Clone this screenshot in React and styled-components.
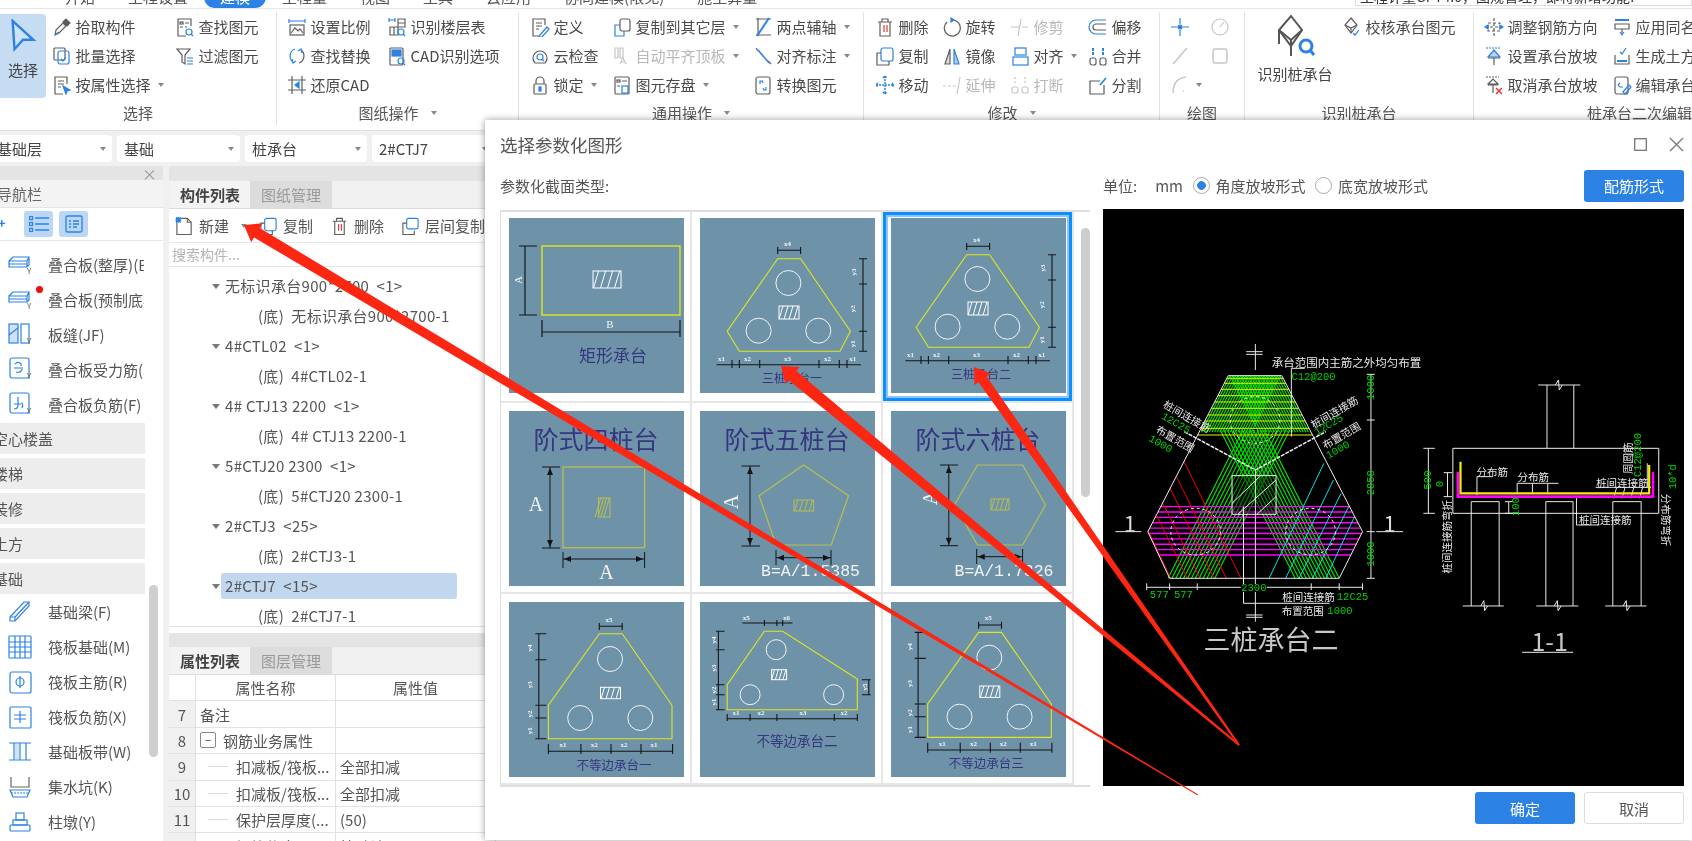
import React from 'react';
import styled, { createGlobalStyle } from 'styled-components';

const BLUE = '#2b82e4';
const GREY = '#5e5e5e';
const OFF = '#c6c6c6';
const FONT = '"Noto Sans CJK SC", "Noto Sans", sans-serif';

const GlobalStyle = createGlobalStyle`
  html, body { margin: 0; padding: 0; background: #fff; }
  body { font-family: ${FONT}; color: #444; overflow: hidden; }
`;

const Page = styled.div`
  position: relative;
  width: 1692px;
  height: 841px;
  overflow: hidden;
  display: flex;
  flex-direction: column;
  background: #f0f0f0;
  filter: blur(0.45px);
`;

/* ---------- menu bar, almost entirely cut off by the top of the shot ---------- */
const MenuBar = styled.div`
  height: 9px;
  flex: none;
  overflow: hidden;
  background: #fff;
  border-bottom: 1px solid #e6e6e6;
  display: flex;
  box-sizing: border-box;
`;
const MenuTabs = styled.div`
  margin-top: -14px;
  height: 22px;
  padding-left: 65px;
  display: flex;
  gap: 33px;
`;
const MenuTab = styled.div`
  font-size: 15px;
  line-height: 22px;
  white-space: nowrap;
  color: ${(p) => (p.$active ? '#fff' : '#555')};
  background: ${(p) => (p.$active ? BLUE : 'transparent')};
  border-radius: ${(p) => (p.$active ? '12px' : '0')};
  padding: ${(p) => (p.$active ? '0 16px' : '0')};
  margin: ${(p) => (p.$active ? '0 -17px 0 -17px' : '0')};
`;
const TopSearch = styled.div`
  margin-left: auto;
  width: 337px;
  height: 20px;
  margin-top: -14px;
  box-sizing: border-box;
  border: 1px solid #ddd;
  background: #fff;
  font-size: 14px;
  line-height: 18px;
  padding-left: 4px;
  color: #333;
  white-space: nowrap;
  overflow: hidden;
`;

/* ---------- ribbon ---------- */
const Ribbon = styled.div`
  height: 122px;
  flex: none;
  display: flex;
  background: #fff;
  border-bottom: 1px solid #e2e2e2;
  box-sizing: border-box;
  padding-top: 3px;
`;
const Group = styled.div`
  flex: none;
  width: ${(p) => p.$w}px;
  height: 113px;
  box-sizing: border-box;
  border-right: 1px solid #e2e2e2;
  display: flex;
  flex-direction: column;
`;
const GroupBody = styled.div`
  flex: 1;
  display: flex;
  padding-left: ${(p) => p.$pl}px;
`;
const GroupLabel = styled.div`
  height: 24px;
  font-size: 15px;
  line-height: 20px;
  color: #555;
  display: flex;
  align-items: center;
  justify-content: center;
  gap: 6px;
`;
const Col = styled.div`
  flex: none;
  width: ${(p) => p.$w}px;
  display: flex;
  flex-direction: column;
`;
const Tool = styled.div`
  height: 29px;
  display: flex;
  align-items: center;
  font-size: 15px;
  white-space: nowrap;
  color: ${(p) => (p.$off ? '#b8b8b8' : '#4a4a4a')};
`;
const ToolIcon = styled.svg`
  flex: none;
  width: 20px;
  height: 20px;
  margin-right: 3.5px;
  fill: none;
  stroke: ${GREY};
  stroke-width: 1.2;
`;
const Caret = styled.span`
  display: inline-block;
  margin-left: ${(p) => p.$ml ?? 6}px;
  border-left: 3.5px solid transparent;
  border-right: 3.5px solid transparent;
  border-top: 4px solid #888;
`;
const BigSelect = styled.div`
  flex: none;
  width: 46px;
  height: 84px;
  margin: 2px 6px 0 0;
  border-radius: 0 4px 4px 0;
  background: #c6dcf2;
  display: flex;
  flex-direction: column;
  align-items: center;
  font-size: 15px;
  line-height: 22px;
  color: #444;
  svg { margin: 5px 0 6px; }
`;
const BigPile = styled.div`
  flex: none;
  width: 76px;
  margin-right: 9px;
  display: flex;
  flex-direction: column;
  align-items: center;
  font-size: 15px;
  white-space: nowrap;
  color: #444;
  svg { margin: 2px 0 5px; }
`;

/* ---------- selector row ---------- */
const SelectorRow = styled.div`
  height: 35px;
  flex: none;
  display: flex;
  align-items: center;
  gap: 5px;
  margin-left: -10px;
`;
const Selector = styled.div`
  width: ${(p) => p.$w}px;
  height: 27px;
  flex: none;
  box-sizing: border-box;
  background: #fff;
  border-radius: 4px;
  padding: 0 6px 0 7px;
  display: flex;
  align-items: center;
  justify-content: space-between;
  font-size: 15px;
  color: #444;
`;

/* ---------- workspace ---------- */
const Workspace = styled.div`
  flex: 1;
  min-height: 0;
  display: flex;
  gap: 6px;
`;
const NavPanel = styled.div`
  position: relative;
  width: 163px;
  flex: none;
  background: #fff;
  display: flex;
  flex-direction: column;
  overflow: hidden;
`;
const PanelStrip = styled.div`
  height: ${(p) => p.$h}px;
  flex: none;
  background: #e4e4e4;
  display: flex;
  justify-content: flex-end;
  align-items: center;
  padding-right: 6px;
  color: #999;
  font-size: 15px;
  line-height: 1;
`;
const NavTitle = styled.div`
  height: 28px;
  flex: none;
  background: #f3f3f3;
  border-bottom: 1px solid #e4e4e4;
  box-sizing: border-box;
  font-size: 15px;
  line-height: 27px;
  color: #666;
  text-indent: -3px;
  white-space: nowrap;
`;
const NavTools = styled.div`
  height: 33px;
  flex: none;
  box-sizing: border-box;
  border-bottom: 1px solid #e6e6e6;
  display: flex;
  align-items: center;
  gap: 6px;
  padding-left: 24px;
  position: relative;
`;
const NavToolBtn = styled.div`
  width: 29px;
  height: 26px;
  border-radius: 3px;
  background: #bcd7f5;
  display: flex;
  align-items: center;
  justify-content: center;
`;
const Sparkle = styled.span`
  position: absolute;
  left: -2px;
  top: 5px;
  color: ${BLUE};
  font-size: 13px;
  font-weight: 700;
`;
const NavList = styled.div`
  width: 145px;
  padding-top: 5.5px;
  overflow: hidden;
`;
const NavItem = styled.div`
  position: relative;
  width: 144px;
  height: 35px;
  box-sizing: border-box;
  display: flex;
  align-items: center;
  font-size: 15px;
  color: #555;
  white-space: nowrap;
  overflow: hidden;
  padding-left: 7px;
  svg { flex: none; width: 26px; height: 26px; margin-right: 15px; fill: none; stroke: ${BLUE}; stroke-width: 1.2; }
`;
const RedDot = styled.span`
  position: absolute;
  left: 36px;
  top: 4px;
  width: 7px;
  height: 7px;
  border-radius: 50%;
  background: #f00d0d;
`;
const NavGroup = styled.div`
  height: 31px;
  margin: ${(p) => (p.$first ? '1.5px' : '4px')} 0 0;
  background: #ededed;
  font-size: 15px;
  line-height: 31px;
  color: #555;
  text-indent: -7px;
  white-space: nowrap;
  overflow: hidden;
  &:last-of-type { margin-bottom: 2.5px; }
`;
const NavScroll = styled.div`
  position: absolute;
  left: 149px;
  top: 419px;
  width: 9px;
  height: 172px;
  border-radius: 5px;
  background: #cfcfcf;
`;
const ListPanel = styled.div`
  flex: 1;
  min-width: 0;
  background: #fff;
  display: flex;
  flex-direction: column;
`;
const TabStrip = styled.div`
  height: 28px;
  flex: none;
  box-sizing: border-box;
  background: #f0f0f0;
  border-bottom: 1px solid #ddd;
  display: flex;
  padding-left: 1px;
`;
const PanelTab = styled.div`
  width: 80px;
  text-align: center;
  font-size: 15px;
  line-height: 27px;
  font-weight: ${(p) => (p.$active ? 600 : 400)};
  color: ${(p) => (p.$active ? '#444' : '#999')};
  background: ${(p) => (p.$active ? '#f3f3f3' : '#dcdcdc')};
  border-right: 1px solid #ddd;
`;
const ListTools = styled.div`
  height: 34px;
  flex: none;
  box-sizing: border-box;
  border-bottom: 1px solid #e8e8e8;
  display: flex;
  align-items: center;
  padding-left: 6px;
  font-size: 15px;
  color: #555;
  white-space: nowrap;
`;
const ListTool = styled.div`
  display: flex;
  align-items: center;
  margin: 0 ${(p) => p.$mr}px 0 ${(p) => p.$ml ?? 0}px;
  svg { width: 19px; height: 20px; margin-right: 5px; fill: none; stroke: ${GREY}; stroke-width: 1.2; }
`;
const SearchBar = styled.div`
  height: 24px;
  flex: none;
  box-sizing: border-box;
  border-bottom: 1px solid #e4e4e4;
  font-size: 14px;
  line-height: 22px;
  padding-left: 3px;
  color: #b5b5b5;
`;
const Tree = styled.div`
  height: 360px;
  flex: none;
  box-sizing: border-box;
  border-bottom: 1px solid #e2e2e2;
  padding: 4px 0 0 43px;
  overflow: hidden;
`;
const TreeRow = styled.div`
  height: 30px;
  display: flex;
  align-items: center;
  font-size: 15px;
  letter-spacing: 0.3px;
  white-space: pre;
  color: #555;
`;
const TreeArrow = styled.span`
  flex: none;
  width: 0;
  margin-right: 1px;
  border-left: 4px solid transparent;
  border-right: 4px solid transparent;
  border-top: 5px solid #777;
`;
const TreeSpacer = styled.span`
  flex: none;
  width: 9px;
`;
const TreeLabel = styled.span`
  width: 236px;
  height: 26px;
  line-height: 26px;
  box-sizing: border-box;
  padding-left: ${(p) => (p.$child ? 37 : 4)}px;
  border-radius: 3px;
  background: ${(p) => (p.$sel ? '#c1d7ee' : 'transparent')};
`;
const Gutter = styled.div`
  height: 6px;
  flex: none;
  background: #fff;
`;
const PropTable = styled.div`
  display: grid;
  grid-template-columns: 27px 140px 160px;
  grid-auto-rows: 26.4px;
  font-size: 15px;
  color: #555;
`;
const PropCell = styled.div`
  border-bottom: 1px solid #e2e2e2;
  border-right: 1px solid #e2e2e2;
  background: ${(p) => (p.$idx ? '#f0f0f0' : '#fff')};
  display: flex;
  align-items: center;
  justify-content: ${(p) => (p.$center ? 'center' : 'flex-start')};
  padding-left: ${(p) => (p.$center ? 0 : 4)}px;
  white-space: nowrap;
  overflow: hidden;
`;
const Collapse = styled.span`
  width: 14px;
  height: 14px;
  border: 1px solid #888;
  border-radius: 2px;
  margin-right: 7px;
  display: flex;
  align-items: center;
  justify-content: center;
  line-height: 1;
  font-size: 12px;
`;
const Branch = styled.span`
  flex: none;
  width: 20px;
  height: 1px;
  margin: 0 8px 0 8px;
  background: #ddd;
`;

/* ---------- modal ---------- */
const Modal = styled.div`
  position: absolute;
  left: 485px;
  top: 120px;
  width: 1207px;
  height: 720px;
  background: #fff;
  box-shadow: 0 0 7px rgba(0, 0, 0, 0.4);
  display: flex;
  flex-direction: column;
  box-sizing: border-box;
  padding: 0 8px 0 15px;
`;
const ModalHead = styled.div`
  height: 48px;
  flex: none;
  display: flex;
  align-items: center;
  justify-content: space-between;
  font-size: 17.5px;
  color: #555;
`;
const HeadControls = styled.div`
  display: flex;
  gap: 22px;
  align-items: center;
  svg { fill: none; stroke: #777; stroke-width: 1.3; display: block; }
`;
const ModalBody = styled.div`
  flex: 1;
  min-height: 0;
  display: flex;
  gap: 13px;
`;
const LeftPane = styled.div`
  width: 590px;
  flex: none;
`;
const PaneLabel = styled.div`
  height: 36px;
  margin-bottom: 6px;
  font-size: 15px;
  line-height: 36px;
  color: #555;
`;
const Gallery = styled.div`
  position: relative;
  height: 577px;
  box-sizing: border-box;
  border: solid #dedede;
  border-width: 2px 0 2px 1px;
  overflow: hidden;
  display: grid;
  grid-template-columns: repeat(3, 191px);
  grid-auto-rows: 191px;
  align-content: start;
`;
const GalleryCell = styled.div`
  border-right: 2px solid #e6e6e6;
  border-bottom: 2px solid #e6e6e6;
  box-sizing: border-box;
  padding: ${(p) => (p.$top ? 6 : 8)}px 0 0 8px;
  box-shadow: ${(p) => (p.$sel ? 'inset 0 0 0 3px #0a8fff, inset 0 0 0 5px #8dc4ff' : 'none')};
`;
const Figure = styled.svg`
  display: block;
  width: 175px;
  height: 175px;
  background: #6e93a9;
  fill: none;
`;
const GalleryScroll = styled.div`
  position: absolute;
  left: 580px;
  top: 16px;
  width: 9px;
  height: 269px;
  border-radius: 5px;
  background: #cdcdcd;
`;
const RightPane = styled.div`
  flex: 1;
  min-width: 0;
`;
const UnitRow = styled.div`
  height: 33px;
  margin: 1px 0 7px;
  display: flex;
  align-items: center;
  font-size: 15px;
  color: #555;
  white-space: nowrap;
`;
const UnitValue = styled.span`
  margin-left: 18px;
`;
const Radio = styled.span`
  width: 17px;
  height: 17px;
  flex: none;
  box-sizing: border-box;
  border-radius: 50%;
  border: 1px solid #aaa;
  margin: 0 5.5px 0 10px;
  background: ${(p) => (p.$on ? `radial-gradient(circle, ${BLUE} 0 4px, #fff 4.6px)` : '#fff')};
`;
const PrimaryBtn = styled.button`
  width: ${(p) => p.$w}px;
  height: 32px;
  border: 0;
  border-radius: 3px;
  margin-left: ${(p) => (p.$auto ? 'auto' : '0')};
  background: ${BLUE};
  color: #fff;
  font: 15px ${FONT};
`;
const GhostBtn = styled.button`
  width: 100px;
  height: 32px;
  border: 1px solid #ddd;
  border-radius: 3px;
  background: #fff;
  color: #555;
  font: 15px ${FONT};
`;
const Cad = styled.svg`
  display: block;
  width: 581px;
  height: 577px;
  background: #000;
  fill: none;
  line, polyline, polygon, ellipse, rect, path { vector-effect: non-scaling-stroke; }
`;
const ModalFoot = styled.div`
  height: 55px;
  flex: none;
  box-sizing: border-box;
  padding-top: 7px;
  display: flex;
  justify-content: flex-end;
  gap: 9px;
`;
const ArrowLayer = styled.svg`
  position: absolute;
  left: 0;
  top: 0;
  width: 1692px;
  height: 841px;
  pointer-events: none;
`;

/* ---------- ribbon icons, 20x20 ---------- */
const b = { stroke: BLUE };
const icons = {
  pick: <><path d="M3 18l1-5 7-7 3 3-7 7z" /><path d="M11 5l3-3 4 4-3 3z" fill={GREY} /><path d="M4 17l3-2" {...b} /></>,
  batch: <><rect x="2" y="2" width="11" height="12" rx="1" /><rect x="6" y="5" width="11" height="13" rx="2" {...b} /><path d="M9 13l2 2 3-4" {...b} /></>,
  attr: <><path d="M15 9V2H3v17h8" /><path d="M6 6h6M6 9h6M6 12h3" /><path d="M11 11l7 4-3 1-1 3z" fill={BLUE} {...b} /></>,
  find: <><path d="M16 9V2H3v17h8" /><rect x="5" y="5" width="3" height="2" /><path d="M10 6h4M5 10h3M10 10h2" /><circle cx="14" cy="15" r="3" {...b} /><path d="M16 17l2 2" {...b} /></>,
  filter: <><path d="M2 3h13l-5 6v9l-3-2V9z" /><path d="M12 12h6M12 15h6M12 18h6" {...b} /></>,
  scale: <><path d="M2 2v4M18 2v4M2 4h16" {...b} /><rect x="3" y="8" width="14" height="10" /><path d="M4 16l4-5 3 3 2-2 3 4" /></>,
  floors: <><path d="M2 1v4M8 1v4M2 3h6" {...b} /><path d="M11 2h7v8h-7zM11 6h7M3 10h8v8H3zM7 10v8" /><circle cx="14" cy="15" r="3" {...b} /><path d="M16 17l2 2" {...b} /></>,
  replace: <><path d="M8 3a7.5 7.5 0 0 0-2 13" {...b} /><path d="M12 17a7.5 7.5 0 0 0 2-13" /><path d="M5 13l1 4 3-2M15 7l-1-4-3 2" {...b} /></>,
  restore: <><path d="M5 1v18M15 1v18M1 5h18M1 15h18" /><path d="M12 7l-4 3 4 3z" fill={BLUE} {...b} /></>,
  cad: <><rect x="3" y="2" width="13" height="17" rx="1" /><rect x="5" y="4" width="9" height="6" fill={BLUE} {...b} /><circle cx="14" cy="15" r="3" {...b} /><path d="M16 17l2 2" {...b} /></>,
  define: <><path d="M15 8V2H3v17h7" /><path d="M6 6h6M6 9h6M6 12h3" /><path d="M10 18l7-8 2 2-7 8-3 0z" {...b} /></>,
  cloud: <><path d="M5 17a6 6 0 0 1-2-5 7 7 0 0 1 14 0 6 6 0 0 1-2 5z" /><circle cx="10" cy="11" r="3" {...b} /><path d="M12 13l2 2" {...b} /></>,
  lock: <><rect x="4" y="9" width="12" height="10" rx="1" /><path d="M6 9V6a4 4 0 0 1 8 0v3" /><rect x="9" y="12" width="2" height="4" fill={BLUE} {...b} /></>,
  layer: <><rect x="8" y="2" width="10" height="12" rx="2" /><path d="M8 8H3v11h9v-5" {...b} /></>,
  level: <g stroke={OFF}><path d="M3 2v10h3V2zM8 2v10h3V2z" /><path d="M8 18l3-6 3 6M9 16h4" /></g>,
  store: <><rect x="3" y="2" width="14" height="17" rx="1" /><rect x="5" y="5" width="3" height="2" /><path d="M10 6h5M5 11h3" /><rect x="10" y="11" width="6" height="7" {...b} /></>,
  axis: <><path d="M3 2h15M3 18h15M5 1v18" /><path d="M16 1L4 19" {...b} strokeWidth="2" /></>,
  dim: <><path d="M3 2l2 3M15 15l3 3" /><path d="M5 4l11 13" {...b} strokeWidth="1.6" /></>,
  convert: <><rect x="3" y="2" width="14" height="17" rx="2" /><path d="M7 9V6h3M13 12v3h-3" {...b} /><path d="M10 8l-1-2M10 13l1 2" {...b} /></>,
  trash: <><path d="M3 5h14M7 5V2h6v3M5 5v14h10V5" /><path d="M9 8v7M12 8v7" stroke="#e53935" /></>,
  copy: <><rect x="6" y="2" width="12" height="13" rx="2" {...b} /><path d="M6 7H2v12h12v-4" /></>,
  move: <path d="M10 1v18M1 10h18M8 3l2-2 2 2M8 17l2 2 2-2M3 8l-2 2 2 2M17 8l2 2-2 2" {...b} strokeWidth="1.5" strokeDasharray="2 1" />,
  rotate: <><path d="M10 3a8 8 0 1 1-5 2" /><path d="M9 1l3 2-3 2z" fill={BLUE} {...b} /></>,
  mirror: <><path d="M8 3L3 18h5z" fill="#ddd" /><path d="M12 3l5 15h-5z" fill="#b5cde8" {...b} /></>,
  extend: <path d="M1 11h3M6 11h3M11 11h3M18 2l-3 17" stroke={OFF} />,
  trim: <path d="M1 10h8M12 10h6M11 2l-3 17" stroke={OFF} />,
  align: <><rect x="5" y="2" width="11" height="7" {...b} /><rect x="3" y="11" width="15" height="8" {...b} /></>,
  cut: <g stroke={OFF}><rect x="2" y="12" width="6" height="6" rx="2" /><rect x="12" y="12" width="6" height="6" rx="2" /><path d="M5 2v7M15 2v7" strokeDasharray="2 2" /></g>,
  offset: <><path d="M18 3H8a7 7 0 0 0 0 14h10" {...b} /><path d="M18 7H8a3 3 0 0 0 0 6h10" /></>,
  merge: <><rect x="2" y="12" width="6" height="7" rx="2" /><rect x="12" y="12" width="6" height="7" rx="2" /><path d="M5 2v7M15 2v7" {...b} strokeWidth="2" strokeDasharray="3 1" /></>,
  split: <><path d="M12 6H2v13h14V10" /><path d="M18 3l-6 7" {...b} strokeWidth="1.6" /></>,
  point: <><path d="M10 1v6M10 13v6M1 10h6M13 10h6" {...b} /><circle cx="10" cy="10" r="2" fill={BLUE} {...b} /></>,
  circle: <g stroke={OFF}><circle cx="10" cy="10" r="8" /><path d="M10 10l4-5" /></g>,
  line: <path d="M3 18L17 2" stroke={OFF} strokeWidth="1.5" />,
  rect: <rect x="3" y="3" width="14" height="14" rx="2" stroke={OFF} strokeWidth="1.5" />,
  arc: <path d="M3 18C3 8 8 3 16 2M13 16h1" stroke={OFF} strokeWidth="1.5" />,
  verify: <><path d="M9 1l6 7-6 8-6-8z" /><path d="M3 8l6 3 6-3M9 11v5" /><path d="M11 16l2 2 4-5" {...b} /></>,
  adjust: <><path d="M4 6h12v8H4zM10 1v18M1 10h18" strokeDasharray="3 2" /><path d="M1 10l3-2v4zM19 10l-3-2v4z" fill={BLUE} {...b} /></>,
  slopeSet: <><path d="M2 2h15" {...b} strokeDasharray="2 1" /><path d="M4 11L10 4l6 7z" fill="#b5d4f2" {...b} /><path d="M4 12h12M10 12v7" /></>,
  slopeOff: <><path d="M2 2h13" strokeDasharray="2 1" /><path d="M4 9L9 4l5 5zM4 10h10M9 10v8" /><path d="M12 13l6 6M18 13l-6 6" stroke="#e53935" strokeWidth="1.5" /></>,
  apply: <><path d="M3 3h14" {...b} strokeWidth="2" /><path d="M3 7h14v5H3zM10 12v4" /><path d="M8 15l2 3 2-3" {...b} /></>,
  earth: <><path d="M8 6l2 2 4-6" {...b} /><path d="M3 9v9h14V9" /><path d="M5 15h10" {...b} strokeWidth="2" /></>,
  edit: <><rect x="3" y="2" width="13" height="17" rx="2" /><path d="M8 8l-2 2 2 2h3" {...b} /><path d="M11 17l6-7 2 2-6 7z" {...b} /></>,
};

const groups = [
  { w: 277, pl: 0, label: '选择', lead: 'select', cols: [
    { w: 123, items: [{ i: 'pick', t: '拾取构件' }, { i: 'batch', t: '批量选择' }, { i: 'attr', t: '按属性选择', c: 1 }] },
    { w: 90, items: [{ i: 'find', t: '查找图元' }, { i: 'filter', t: '过滤图元' }] },
  ] },
  { w: 242, pl: 10, label: '图纸操作', c: 1, cols: [
    { w: 100, items: [{ i: 'scale', t: '设置比例' }, { i: 'replace', t: '查找替换' }, { i: 'restore', t: '还原CAD' }] },
    { w: 120, items: [{ i: 'floors', t: '识别楼层表' }, { i: 'cad', t: 'CAD识别选项' }] },
  ] },
  { w: 345, pl: 11, label: '通用操作', c: 1, cols: [
    { w: 82, items: [{ i: 'define', t: '定义' }, { i: 'cloud', t: '云检查' }, { i: 'lock', t: '锁定', c: 1 }] },
    { w: 141, items: [{ i: 'layer', t: '复制到其它层', c: 1 }, { i: 'level', t: '自动平齐顶板', c: 1, off: 1 }, { i: 'store', t: '图元存盘', c: 1 }] },
    { w: 100, items: [{ i: 'axis', t: '两点辅轴', c: 1 }, { i: 'dim', t: '对齐标注', c: 1 }, { i: 'convert', t: '转换图元' }] },
  ] },
  { w: 296, pl: 11, label: '修改', c: 1, cols: [
    { w: 67, items: [{ i: 'trash', t: '删除' }, { i: 'copy', t: '复制' }, { i: 'move', t: '移动' }] },
    { w: 68, items: [{ i: 'rotate', t: '旋转' }, { i: 'mirror', t: '镜像' }, { i: 'extend', t: '延伸', off: 1 }] },
    { w: 78, items: [{ i: 'trim', t: '修剪', off: 1 }, { i: 'align', t: '对齐', c: 1 }, { i: 'cut', t: '打断', off: 1 }] },
    { w: 60, items: [{ i: 'offset', t: '偏移' }, { i: 'merge', t: '合并' }, { i: 'split', t: '分割' }] },
  ] },
  { w: 85, pl: 10, label: '绘图', cols: [
    { w: 40, items: [{ i: 'point' }, { i: 'line' }, { i: 'arc', c: 1 }] },
    { w: 30, items: [{ i: 'circle' }, { i: 'rect' }] },
  ] },
  { w: 229, pl: 12, label: '识别桩承台', lead: 'pile', cols: [
    { w: 120, items: [{ i: 'verify', t: '校核承台图元' }] },
  ] },
  { w: 332, pl: 10, label: '桩承台二次编辑', cols: [
    { w: 128, items: [{ i: 'adjust', t: '调整钢筋方向' }, { i: 'slopeSet', t: '设置承台放坡' }, { i: 'slopeOff', t: '取消承台放坡' }] },
    { w: 140, items: [{ i: 'apply', t: '应用同名承台' }, { i: 'earth', t: '生成土方' }, { i: 'edit', t: '编辑承台' }] },
  ] },
];

const RibbonGroup = ({ g }) => (
  <Group $w={g.w}>
    <GroupBody $pl={g.pl}>
      {g.lead === 'select' && (
        <BigSelect>
          <svg width="28" height="34" viewBox="0 0 28 36" fill="#cfe2f6" stroke={BLUE} strokeWidth="2.5">
            <path d="M3 2l22 20-11 0-9 10z" />
          </svg>
          选择
        </BigSelect>
      )}
      {g.lead === 'pile' && (
        <BigPile>
          <svg width="44" height="44" viewBox="0 0 44 44" fill="none" stroke="#555" strokeWidth="2">
            <path d="M18 2l11 14-11 16L6 16z" />
            <path d="M6 16v14M29 16l-11 10M6 16l12 10v16" />
            <circle cx="33" cy="32" r="6" stroke={BLUE} strokeWidth="3" />
            <path d="M37 36l4 5" stroke={BLUE} strokeWidth="3" />
          </svg>
          识别桩承台
        </BigPile>
      )}
      {g.cols.map((col, ci) => (
        <Col key={ci} $w={col.w}>
          {col.items.map((it) => (
            <Tool key={it.i} $off={it.off}>
              <ToolIcon viewBox="0 0 20 20">{icons[it.i]}</ToolIcon>
              {it.t}
              {it.c && <Caret $ml={it.t ? 7 : 2} />}
            </Tool>
          ))}
        </Col>
      ))}
    </GroupBody>
    <GroupLabel>
      {g.label}
      {g.c && <Caret />}
    </GroupLabel>
  </Group>
);

/* ---------- nav list ---------- */
const Yy = () => <text x="20" y="23" fontSize="8" fill={GREY} stroke="none">Y</text>;
const nav = {
  slab: <><path d="M2 10l4-4h16v8l-2 2H2zM2 10h18v6M20 10l2-4M2 13h18" /><Yy /></>,
  seam: <><rect x="2" y="3" width="9" height="19" fill="#cfe2f6" /><rect x="14" y="3" width="8" height="19" /><path d="M2 14l9-7" /><Yy /></>,
  bar1: <><rect x="3" y="2" width="19" height="20" rx="2" /><path d="M7 12h9M8 8c3-3 7-1 6 2M9 16c4 1 6-1 6-3" /><Yy /></>,
  bar2: <><rect x="3" y="2" width="19" height="20" rx="2" /><path d="M7 13h7M11 6v8c0 3-2 4-4 4M14 12c2 0 2 3 1 5" /><Yy /></>,
  beam: <><path d="M3 18L17 3h5v4L8 22H3z" /><path d="M3 18h5v4M8 18L22 3" /></>,
  raft: <><rect x="2" y="2" width="22" height="22" rx="1" /><path d="M2 8h22M2 13h22M2 18h22M8 2v22M13 2v22M18 2v22" /></>,
  raftM: <><rect x="3" y="3" width="21" height="21" rx="2" /><circle cx="13" cy="13" r="4" /><path d="M13 7v12" /></>,
  raftN: <><rect x="3" y="3" width="21" height="21" rx="1" /><path d="M7 11h12M7 15h12M13 7v12" /></>,
  strip: <><path d="M2 4h22M2 21h22M7 4v17M13 4v17M19 4v17" /><rect x="8" y="5" width="4" height="15" fill="#cfe2f6" stroke="none" /></>,
  pit: <><path d="M4 3v10h18V3" stroke="#666" /><path d="M3 16h20l-3 7H6z" /><path d="M4 19h18" strokeDasharray="2 1" /></>,
  pier: <><rect x="9" y="4" width="8" height="7" /><rect x="6" y="11" width="14" height="5" /><rect x="3" y="16" width="20" height="6" rx="1" /></>,
};
const NavRow = ({ icon, text, dot }) => (
  <NavItem>
    <svg viewBox="0 0 26 26">{nav[icon]}</svg>
    {dot && <RedDot />}
    {text}
  </NavItem>
);

/* ---------- gallery figures ---------- */
const BLK = '#141414';
const YEL = '#e2e61c';
const OLV = '#b8bf4e';
const NAVY = '#36367f';

const Hatch = ({ x, y, w, h, c = '#fff' }) => (
  <g stroke={c} strokeWidth="1">
    <rect x={x} y={y} width={w} height={h} />
    {[0.2, 0.45, 0.7, 0.95].map((f) => (
      <line key={f} x1={x + w * f - h * 0.3} y1={y + h} x2={x + w * f} y2={y} />
    ))}
  </g>
);
const Small = ({ x, y, rot, children }) => (
  <text
    x={x}
    y={y}
    fontSize="7"
    fontWeight="700"
    fontFamily="Liberation Serif, serif"
    fill="#f4f4f4"
    textAnchor="middle"
    dominantBaseline="central"
    transform={rot ? `rotate(${rot} ${x} ${y})` : undefined}
  >
    {children}
  </text>
);
const Caption = ({ x, y, size, children }) => (
  <text x={x} y={y} fontSize={size} fill={NAVY} fontFamily={FONT} textAnchor="middle" dominantBaseline="central">
    {children}
  </text>
);
const Serif = ({ x, y, size = 20, rot, children }) => (
  <text
    x={x}
    y={y}
    fontSize={size}
    fill="#f2f2f2"
    fontFamily="Liberation Serif, serif"
    textAnchor="middle"
    dominantBaseline="central"
    transform={rot ? `rotate(${rot} ${x} ${y})` : undefined}
  >
    {children}
  </text>
);
const Pile = ({ cx, cy, r = 12.5 }) => <circle cx={cx} cy={cy} r={r} stroke="#f4f4f4" strokeWidth="1" />;

const RectCap = () => (
  <Figure viewBox="0 0 175 175">
    <rect x="33" y="28" width="138" height="69" stroke={YEL} strokeWidth="1.4" />
    <path d="M16 28v69M10 28h18M10 97h18M33 114h138M33 102v17M171 102v17" stroke={BLK} strokeWidth="1.2" />
    <Serif x="8.5" y="62" size="11" rot={-90}>A</Serif>
    <Serif x="101" y="106" size="11">B</Serif>
    <Hatch x={84} y={53} w={28} h={17} />
    <Caption x={104} y={136} size={17}>矩形承台</Caption>
  </Figure>
);

const ThreePile = ({ dx, dy, label, labelX }) => (
  <Figure viewBox="0 0 175 175">
    <g transform={`translate(${dx} ${dy})`}>
      <polygon points="77.7,40.7 100.6,40.7 150.4,113.3 140,133.3 39.4,133.3 27.2,113.3" stroke={YEL} strokeWidth="1.1" />
      <Pile cx={88.4} cy={65} />
      <Pile cx={58.6} cy={112.7} />
      <Pile cx={118.3} cy={112.7} />
      <Hatch x={79} y={88} w={20} h={13} />
      <path
        d="M77.7 32.3h23M77.7 29v7M100.6 29v7M163 40.7v92.6M159 40.7h8M159 66h8M159 113.3h8M159 133.3h8M16.5 146.7h144.5M32 142v8M39.4 142v8M59.7 142v8M119 142v8M139.3 142v8M147 142v8"
        stroke={BLK}
        strokeWidth="1.1"
      />
      <Small x={87.6} y={25.7}>x4</Small>
      <Small x={153.5} y={54} rot={-90}>y3</Small>
      <Small x={153.5} y={90.7} rot={-90}>y2</Small>
      <Small x={153.5} y={125.7} rot={-90}>y1</Small>
      <Small x={21.4} y={140.7}>x1</Small>
      <Small x={47.5} y={140.7}>x2</Small>
      <Small x={87.6} y={140.7}>x3</Small>
      <Small x={127.4} y={140.7}>x2</Small>
      <Small x={152.7} y={140.7}>x1</Small>
      <Caption x={labelX} y={159} size={12}>{label}</Caption>
    </g>
  </Figure>
);

const arrowHead = (x, y, dir) => {
  const m = { u: [-3, 7, 3, 7], d: [-3, -7, 3, -7], l: [7, -3, 7, 3], r: [-7, -3, -7, 3] }[dir];
  return <polygon points={`${x},${y} ${x + m[0]},${y + m[1]} ${x + m[2]},${y + m[3]}`} fill={BLK} />;
};

const StepFour = () => (
  <Figure viewBox="0 0 175 175">
    <Caption x={87} y={27} size={25}>阶式四桩台</Caption>
    <rect x="54" y="56" width="81.6" height="80.7" stroke={OLV} strokeWidth="1.3" />
    <Hatch x={89.5} y={87} w={11.5} h={19} c={OLV} />
    <path d="M41 56v81M33 56h18M33 137h18M54 148h81.6M54 141v16M135.6 141v16" stroke={BLK} strokeWidth="1" />
    {arrowHead(41, 57, 'u')}
    {arrowHead(41, 136, 'd')}
    {arrowHead(55, 148, 'l')}
    {arrowHead(134, 148, 'r')}
    <Serif x={27} y={93}>A</Serif>
    <Serif x={97.6} y={161}>A</Serif>
  </Figure>
);
const StepFive = () => (
  <Figure viewBox="0 0 175 175">
    <Caption x={87} y={27} size={25}>阶式五桩台</Caption>
    <polygon points="103.7,54 148.5,84.7 131.3,134 76.2,134 59,84.7" stroke={OLV} strokeWidth="1.2" />
    <Hatch x={94} y={89} w={19.6} h={11} c={OLV} />
    <path d="M50 55v80M41.5 55h18.5M41.5 135h18.5M76 146.7h55M76 139v15M131 139v15" stroke={BLK} strokeWidth="1" />
    {arrowHead(50, 56, 'u')}
    {arrowHead(50, 134, 'd')}
    {arrowHead(77, 146.7, 'l')}
    {arrowHead(130, 146.7, 'r')}
    <Serif x={31} y={91} rot={-90}>A</Serif>
    <text x="61" y="165" fontSize="16.5" fill="#f2f2f2" fontFamily="Liberation Mono, monospace">B=A/1.5385</text>
  </Figure>
);
const StepSix = () => (
  <Figure viewBox="0 0 175 175">
    <Caption x={87} y={27} size={25}>阶式六桩台</Caption>
    <polygon points="86.5,54 131.6,54 154.6,94 131.6,134 86.5,134 63.5,94" stroke={OLV} strokeWidth="1.2" />
    <Hatch x={100} y={88} w={18} h={11} c={OLV} />
    <path d="M57.8 54v80.7M49 54h18M49 134.7h18M85.7 145.7h46M85.7 138v15M131.6 138v15" stroke={BLK} strokeWidth="1" />
    {arrowHead(57.8, 55, 'u')}
    {arrowHead(57.8, 133.7, 'd')}
    {arrowHead(86.7, 145.7, 'l')}
    {arrowHead(130.6, 145.7, 'r')}
    <Serif x={38.6} y={87} rot={-90}>A</Serif>
    <text x="63.5" y="165" fontSize="16.5" fill="#f2f2f2" fontFamily="Liberation Mono, monospace">B=A/1.7326</text>
  </Figure>
);

const UnequalA = ({ dx, dy, label, labelX }) => (
  <Figure viewBox="0 0 175 175">
    <g transform={`translate(${dx} ${dy})`}>
      <polygon points="90.3,31.7 113.2,31.7 163,103.3 163,136.7 39.4,136.7 39.4,103.3" stroke={YEL} strokeWidth="1.1" />
      <Pile cx={101} cy={57} />
      <Pile cx={71.2} cy={116} />
      <Pile cx={131.3} cy={116} />
      <Hatch x={91.5} y={85.3} w={20} h={11.4} />
      <path
        d="M90.3 24.3h23M90.3 21v7M113.2 21v7M29.8 31.7v105M26.4 31.7h11M26.4 57.7h11M26.4 103.3h11M26.4 116h11M26.4 136.7h11M39.4 149.3h124.2M39.4 142v10M71.9 142v10M102 142v10M132 142v10M163.6 142v10"
        stroke={BLK}
        strokeWidth="1.1"
      />
      <Small x={100} y={17.7}>x5</Small>
      <Small x={21.4} y={46} rot={-90}>y4</Small>
      <Small x={21.4} y={82.7} rot={-90}>y3</Small>
      <Small x={21.4} y={112} rot={-90}>y2</Small>
      <Small x={21.4} y={128.7} rot={-90}>y1</Small>
      <Small x={54} y={143}>x1</Small>
      <Small x={85.3} y={143}>x2</Small>
      <Small x={115} y={143}>x2</Small>
      <Small x={145} y={143}>x1</Small>
      <Caption x={labelX} y={162} size={12.5}>{label}</Caption>
    </g>
  </Figure>
);
const UnequalB = () => (
  <Figure viewBox="0 0 175 175">
    <polygon points="64.4,29.3 82.7,29.3 157.3,77 157.3,107.7 27.2,107.7 27.2,82.7" stroke={YEL} strokeWidth="1.1" />
    <Pile cx={76.2} cy={47.7} r={10} />
    <Pile cx={50.1} cy={92.7} r={10} />
    <Pile cx={133.6} cy={92.7} r={10} />
    <Hatch x={71.6} y={67.7} w={15} h={10} />
    <path
      d="M42.5 21h50M64.4 18v6M76.9 18v6M82.7 18v6M18.4 29.3v78.4M16 29.3h8.5M16 47.7h8.5M16 82.7h8.5M16 92.7h8.5M16 107.7h8.5M168.8 77.7v15M162 77.7h8.7M162 92.7h8.7M27.2 116.7h130M27.2 112v7M50.1 112v7M76.9 112v7M134.3 112v7M157.3 112v7"
      stroke={BLK}
      strokeWidth="1.1"
    />
    <Small x={46.3} y={16}>x5</Small>
    <Small x={86.5} y={16}>x6</Small>
    <Small x={13.8} y={38} rot={-90}>y4</Small>
    <Small x={13.8} y={66} rot={-90}>y3</Small>
    <Small x={13.8} y={88} rot={-90}>y2</Small>
    <Small x={13.8} y={100} rot={-90}>y1</Small>
    <Small x={165} y={85} rot={-90}>y5</Small>
    <Small x={36} y={111}>x1</Small>
    <Small x={61} y={111}>x2</Small>
    <Small x={103} y={111}>x3</Small>
    <Small x={144} y={111}>x2</Small>
    <Caption x={97} y={138} size={13.5}>不等边承台二</Caption>
  </Figure>
);

/* ---------- CAD preview, drawn in the preview's page coordinates ---------- */
const zx = (X) => 1100 + X / 2.613;
const zy = (Y) => 330 + Y / 3;
const MONO = '"Liberation Mono", monospace';
const GREEN = '#00d400';
const CadText = ({ X, Y, size = 10.5, fill = '#e8e8e8', rot, anchor = 'middle', mono, children }) => (
  <text
    x={zx(X)}
    y={zy(Y)}
    fontSize={size}
    fill={fill}
    fontFamily={mono ? MONO : FONT}
    textAnchor={anchor}
    dominantBaseline="central"
    transform={rot ? `rotate(${rot} ${zx(X)} ${zy(Y)})` : undefined}
  >
    {children}
  </text>
);
const Num = (props) => <CadText fill={GREEN} mono {...props} />;
const leftEdge = (Y) => (Y < 605 ? 335 - (Y - 137) * 0.449 : 125 + (Y - 605) * 0.407);
const rightEdge = (Y) => (Y < 605 ? 475 + (Y - 137) * 0.451 : 686 - (Y - 605) * 0.436);
const range = (from, to, n) => Array.from({ length: n }, (_, i) => from + ((to - from) * i) / (n - 1));
const Segs = ({ list, stroke, width = 1, dash }) =>
  list.map((s, i) => (
    <line key={i} x1={s[0]} y1={s[1]} x2={s[2]} y2={s[3]} stroke={stroke} strokeWidth={width} strokeDasharray={dash} />
  ));

const greenLeft = range(178, 300, 13).map((B) => [B, 745, B + 0.44 * 445, 300]);
const greenRight = range(510, 625, 13).map((B) => [B, 745, B - 0.44 * 445, 300]);
const lattice = range(340, 470, 20).flatMap((X0) => [
  [X0, 137, X0 - 0.44 * 170, 307],
  [X0, 137, X0 + 0.44 * 170, 307],
]);
const yellow = [145, 160, 178, 197, 216, 235, 255, 273, 295, 315].map((Y) => [leftEdge(Y), Y, rightEdge(Y), Y]);
const magenta = range(530, 675, 10).map((Y) => [leftEdge(Y), Y, rightEdge(Y), Y]);
const reds = [[220, 395, 368, 745], [200, 440, 330, 745], [183, 475, 298, 745], [162, 515, 262, 745], [148, 555, 228, 745], [125, 600, 185, 745]];
const cyans = [[585, 400, 442, 745], [610, 450, 485, 745], [630, 490, 520, 745], [650, 530, 555, 745], [665, 560, 590, 745]];

const CadPreview = () => (
  <Cad viewBox="1103 209 581 577">
    <g transform="matrix(0.3827 0 0 0.3333 1100 330)">
      <Segs list={greenLeft} stroke="#00e000" width={1.2} />
      <Segs list={greenRight} stroke="#00e000" width={1.2} />
      <Segs list={lattice} stroke="#00e000" width={1.2} />
      <Segs list={yellow} stroke="#f0f000" />
      <Segs list={magenta} stroke="#ff00ff" width={1.3} />
      <Segs list={reds} stroke="#f00000" />
      <Segs list={cyans} stroke="#00e0e0" />
      <polygon points="335,137 475,137 686,605 625,745 182,745 125,605" stroke="#eee" />
      <ellipse cx="405" cy="270" rx="65" ry="70" stroke="#eee" strokeDasharray="3 3" />
      <ellipse cx="250" cy="605" rx="65" ry="70" stroke="#eee" strokeDasharray="3 3" />
      <ellipse cx="550" cy="605" rx="65" ry="70" stroke="#eee" strokeDasharray="3 3" />
      <polyline points="220,305 406,420 590,305" stroke="#eee" strokeWidth="1.5" strokeDasharray="4 1" />
      <rect x="345" y="437" width="115" height="116" stroke="#eee" fill="#000" fillOpacity="0.4" />
      <Segs list={[[345, 520, 420, 437], [360, 553, 460, 450], [410, 553, 460, 500]]} stroke="#eee" />
      <polyline points="375,530 375,820 600,820" stroke="#eee" />
      <Segs
        list={[
          [406, 42, 406, 120], [406, 420, 406, 875], [382, 65, 425, 65], [382, 73, 425, 73], [382, 855, 425, 855], [382, 862, 425, 862],
          [708, 133, 708, 745], [697, 133, 718, 133], [697, 270, 718, 270], [697, 605, 718, 605], [697, 745, 718, 745],
          [122, 772, 686, 772], [122, 760, 122, 780], [182, 760, 182, 780], [254, 760, 254, 780], [552, 760, 552, 780], [625, 760, 625, 780], [686, 760, 686, 780],
          [40, 605, 108, 605], [722, 605, 792, 605],
          [500, 115, 535, 115], [500, 115, 500, 320],
          [1168, 165, 1168, 355], [1238, 165, 1238, 355], [1145, 165, 1255, 165],
          [858, 355, 858, 550], [845, 355, 875, 355], [845, 550, 875, 550], [908, 428, 908, 500], [898, 428, 920, 428], [898, 500, 920, 500],
          [1068, 515, 1068, 550], [1058, 515, 1080, 515], [1058, 550, 1080, 550],
          [970, 515, 970, 828], [1043, 515, 1043, 828], [970, 515, 1043, 515],
          [1165, 515, 1165, 828], [1236, 515, 1236, 828], [1165, 515, 1236, 515],
          [1340, 515, 1340, 828], [1414, 515, 1414, 828], [1340, 515, 1414, 515],
          [948, 828, 1055, 828], [1140, 828, 1250, 828], [1320, 828, 1428, 828],
          [985, 440, 1025, 440], [985, 440, 985, 495],
          [1090, 460, 1198, 460], [1090, 460, 1090, 490], [1130, 460, 1130, 490], [1170, 460, 1170, 490],
          [1295, 472, 1440, 472], [1350, 472, 1342, 505], [1372, 472, 1364, 505], [1395, 472, 1387, 505], [1418, 472, 1410, 505],
          [1245, 500, 1245, 585], [1245, 585, 1305, 585],
          [1430, 400, 1430, 470],
        ]}
        stroke="#e8e8e8"
      />
      <rect x="922" y="355" width="538" height="195" stroke="#eee" />
      <polyline points="935,425 935,500 1445,500 1445,425" stroke="#ff00ff" strokeWidth="2.6" />
      <polyline points="942,395 942,490 1435,490 1435,405" stroke="#f0f000" strokeWidth="2.2" />
      <polyline points="1190,165 1198,150 1200,180 1208,165" stroke="#eee" />
      <polyline points="995,828 1003,812 1005,842 1013,828" stroke="#eee" />
      <polyline points="1187,828 1195,812 1197,842 1205,828" stroke="#eee" />
      <polyline points="1367,828 1375,812 1377,842 1385,828" stroke="#eee" />
      <line x1="1103" y1="967" x2="1236" y2="967" stroke="#eee" />
    </g>
    <CadText X={644} Y={95} size={11.5}>承台范围内主筋之外均匀布置</CadText>
    <Num X={558} Y={140}>C12@200</Num>
    <CadText X={228} Y={258} rot={30}>桩间连接筋</CadText>
    <Num X={198} Y={280} rot={30}>12C25</Num>
    <CadText X={197} Y={325} rot={30}>布置范围</CadText>
    <Num X={158} Y={342} rot={30}>1000</Num>
    <CadText X={612} Y={245} rot={-30}>桩间连接筋</CadText>
    <Num X={598} Y={285} rot={-30}>12C25</Num>
    <CadText X={630} Y={315} rot={-30}>布置范围</CadText>
    <Num X={622} Y={360} rot={-30}>1000</Num>
    <Num X={708} Y={172} rot={-90}>1000</Num>
    <Num X={708} Y={458} rot={-90}>2858</Num>
    <Num X={708} Y={672} rot={-90}>1000</Num>
    <Num X={155} Y={795}>577</Num>
    <Num X={218} Y={795}>577</Num>
    <rect x={zx(368)} y={zy(762)} width="26" height="8" fill="#000" />
    <Num X={402} Y={775}>2300</Num>
    <CadText X={545} Y={800}>桩间连接筋</CadText>
    <Num X={660} Y={800}>12C25</Num>
    <CadText X={530} Y={842}>布置范围</CadText>
    <Num X={627} Y={842}>1000</Num>
    <CadText X={78} Y={575} size={22} fill="#ddd">1</CadText>
    <CadText X={757} Y={575} size={22} fill="#ddd">1</CadText>
    <CadText X={447} Y={925} size={27} fill="#c8c8c8">三桩承台二</CadText>
    <CadText X={1175} Y={930} size={25} fill="#c8c8c8">1-1</CadText>
    <Num X={856} Y={450} rot={-90}>500</Num>
    <Num X={888} Y={462} rot={-90}>0</Num>
    <Num X={1088} Y={530} rot={-90}>100</Num>
    <CadText X={1025} Y={423}>分布筋</CadText>
    <CadText X={1132} Y={440}>分布筋</CadText>
    <CadText X={1365} Y={458}>桩间连接筋</CadText>
    <CadText X={1320} Y={568}>桩间连接筋</CadText>
    <CadText X={905} Y={620} rot={-90}>桩间连接筋弯折</CadText>
    <CadText X={1480} Y={570} rot={90}>分布筋弯折</CadText>
    <CadText X={1378} Y={385} rot={-90}>周圆筋</CadText>
    <Num X={1406} Y={375} rot={-90}>C12@200</Num>
    <Num X={1497} Y={440} rot={-90}>10*d</Num>
  </Cad>
);

/* ---------- red annotation arrows ---------- */
const arrowPoints = (tail, tip, headLen, headW, neckW, tailW) => {
  const dx = tip[0] - tail[0];
  const dy = tip[1] - tail[1];
  const len = Math.hypot(dx, dy);
  const ux = dx / len;
  const uy = dy / len;
  const bx = tip[0] - ux * headLen;
  const by = tip[1] - uy * headLen;
  const off = (x, y, w) => `${x - (uy * w) / 2},${y + (ux * w) / 2}`;
  const off2 = (x, y, w) => `${x + (uy * w) / 2},${y - (ux * w) / 2}`;
  return [
    off(tail[0], tail[1], tailW), off(bx, by, neckW), off(bx, by, headW), `${tip[0]},${tip[1]}`,
    off2(bx, by, headW), off2(bx, by, neckW), off2(tail[0], tail[1], tailW),
  ].join(' ');
};

const treeRows = [
  ['无标识承台900*2700  <1>'], ['(底)  无标识承台900*2700-1', 1],
  ['4#CTL02  <1>'], ['(底)  4#CTL02-1', 1],
  ['4# CTJ13 2200  <1>'], ['(底)  4# CTJ13 2200-1', 1],
  ['5#CTJ20 2300  <1>'], ['(底)  5#CTJ20 2300-1', 1],
  ['2#CTJ3  <25>'], ['(底)  2#CTJ3-1', 1],
  ['2#CTJ7  <15>', 0, 1], ['(底)  2#CTJ7-1', 1],
];

const App = () => (
  <>
    <GlobalStyle />
    <Page>
      <MenuBar>
        <MenuTabs>
          {['开始', '工程设置', '建模', '工程量', '视图', '工具', '云应用', '协同建模(限免)', '施工算量'].map((t) => (
            <MenuTab key={t} $active={t === '建模'}>{t}</MenuTab>
          ))}
        </MenuTabs>
        <TopSearch>工程计量GPT4.0，图规管理，即将新增功能!</TopSearch>
      </MenuBar>

      <Ribbon>
        {groups.map((g) => <RibbonGroup key={g.label} g={g} />)}
      </Ribbon>

      <SelectorRow>
        {[['基础层', 122], ['基础', 123], ['桩承台', 122], ['2#CTJ7', 122]].map(([t, w]) => (
          <Selector key={t} $w={w}>{t}<Caret /></Selector>
        ))}
      </SelectorRow>

      <Workspace>
        <NavPanel>
          <PanelStrip $h={14}>×</PanelStrip>
          <NavTitle>导航栏</NavTitle>
          <NavTools>
            <Sparkle>+</Sparkle>
            <NavToolBtn>
              <svg width="20" height="16" viewBox="0 0 20 16" fill="none" stroke={BLUE} strokeWidth="1.3">
                <path d="M6 2h14M6 8h14M6 14h14" />
                <rect x="0.5" y="0.5" width="3" height="3" />
                <rect x="0.5" y="6.5" width="3" height="3" />
                <rect x="0.5" y="12.5" width="3" height="3" />
              </svg>
            </NavToolBtn>
            <NavToolBtn>
              <svg width="18" height="18" viewBox="0 0 18 18" fill="none" stroke={BLUE} strokeWidth="1.3">
                <rect x="1" y="1" width="16" height="16" rx="1.5" />
                <path d="M4 6h2M8 6h6M4 9h2M8 9h6M4 12h2M8 12h4" />
              </svg>
            </NavToolBtn>
          </NavTools>
          <NavList>
            <NavRow icon="slab" text="叠合板(整厚)(B)" />
            <NavRow icon="slab" text="叠合板(预制底板)" dot />
            <NavRow icon="seam" text="板缝(JF)" />
            <NavRow icon="bar1" text="叠合板受力筋(S)" />
            <NavRow icon="bar2" text="叠合板负筋(F)" />
            <NavGroup $first>空心楼盖</NavGroup>
            <NavGroup>楼梯</NavGroup>
            <NavGroup>装修</NavGroup>
            <NavGroup>土方</NavGroup>
            <NavGroup>基础</NavGroup>
            <NavRow icon="beam" text="基础梁(F)" />
            <NavRow icon="raft" text="筏板基础(M)" />
            <NavRow icon="raftM" text="筏板主筋(R)" />
            <NavRow icon="raftN" text="筏板负筋(X)" />
            <NavRow icon="strip" text="基础板带(W)" />
            <NavRow icon="pit" text="集水坑(K)" />
            <NavRow icon="pier" text="柱墩(Y)" />
          </NavList>
          <NavScroll />
        </NavPanel>

        <ListPanel>
          <PanelStrip $h={15} />
          <TabStrip>
            <PanelTab $active>构件列表</PanelTab>
            <PanelTab>图纸管理</PanelTab>
          </TabStrip>
          <ListTools>
            <ListTool $mr={12}>
              <svg viewBox="0 0 20 20"><path d="M2 4v15h15V6l-4-4H6" /><path d="M13 2v4h4" /><rect x="1" y="1" width="5" height="5" fill={BLUE} stroke={BLUE} strokeDasharray="1 1" /></svg>
              新建
            </ListTool>
            <Caret $ml={0} />
            <ListTool $mr={17} $ml={12}>
              <svg viewBox="0 0 20 20"><rect x="6" y="2" width="12" height="13" rx="2" stroke={BLUE} /><path d="M6 7H2v12h12v-4" /></svg>
              复制
            </ListTool>
            <ListTool $mr={17}>
              <svg viewBox="0 0 20 20"><path d="M3 5h14M7 5V2h6v3M5 5v14h10V5" /><path d="M9 8v7M12 8v7" stroke="#e53935" /></svg>
              删除
            </ListTool>
            <ListTool $mr={0}>
              <svg viewBox="0 0 20 20"><rect x="6" y="2" width="12" height="11" rx="2" stroke={BLUE} /><path d="M6 7H2v12h12v-4" /></svg>
              层间复制
            </ListTool>
          </ListTools>
          <SearchBar>搜索构件...</SearchBar>
          <Tree>
            {treeRows.map(([t, child, sel]) => (
              <TreeRow key={t}>
                {child ? <TreeSpacer /> : <TreeArrow />}
                <TreeLabel $child={child} $sel={sel}>{t}</TreeLabel>
              </TreeRow>
            ))}
          </Tree>
          <Gutter />
          <PanelStrip $h={14} />
          <TabStrip>
            <PanelTab $active>属性列表</PanelTab>
            <PanelTab>图层管理</PanelTab>
          </TabStrip>
          <PropTable>
            <PropCell />
            <PropCell $center>属性名称</PropCell>
            <PropCell $center>属性值</PropCell>
            <PropCell $idx $center>7</PropCell>
            <PropCell>备注</PropCell>
            <PropCell />
            <PropCell $idx $center>8</PropCell>
            <PropCell><Collapse>−</Collapse>钢筋业务属性</PropCell>
            <PropCell />
            <PropCell $idx $center>9</PropCell>
            <PropCell><Branch />扣减板/筏板...</PropCell>
            <PropCell>全部扣减</PropCell>
            <PropCell $idx $center>10</PropCell>
            <PropCell><Branch />扣减板/筏板...</PropCell>
            <PropCell>全部扣减</PropCell>
            <PropCell $idx $center>11</PropCell>
            <PropCell><Branch />保护层厚度(...</PropCell>
            <PropCell>(50)</PropCell>
            <PropCell $idx $center>12</PropCell>
            <PropCell><Branch />钢筋信息</PropCell>
            <PropCell>按默认</PropCell>
          </PropTable>
        </ListPanel>
      </Workspace>

      <Modal>
        <ModalHead>
          选择参数化图形
          <HeadControls>
            <svg width="13" height="13" viewBox="0 0 13 13"><rect x="0.7" y="0.7" width="11.6" height="11.6" /></svg>
            <svg width="15" height="15" viewBox="0 0 15 15"><path d="M1 1l13 13M14 1L1 14" /></svg>
          </HeadControls>
        </ModalHead>
        <ModalBody>
          <LeftPane>
            <PaneLabel>参数化截面类型:</PaneLabel>
            <Gallery>
              <GalleryCell $top><RectCap /></GalleryCell>
              <GalleryCell $top><ThreePile dx={0} dy={0} label="三桩承台一" labelX={92} /></GalleryCell>
              <GalleryCell $top $sel><ThreePile dx={-2} dy={-4} label="三桩承台二" labelX={92} /></GalleryCell>
              <GalleryCell><StepFour /></GalleryCell>
              <GalleryCell><StepFive /></GalleryCell>
              <GalleryCell><StepSix /></GalleryCell>
              <GalleryCell><UnequalA dx={0} dy={0} label="不等边承台一" labelX={105} /></GalleryCell>
              <GalleryCell><UnequalB /></GalleryCell>
              <GalleryCell><UnequalA dx={-2.7} dy={-1.3} label="不等边承台三" labelX={98} /></GalleryCell>
              <GalleryScroll />
            </Gallery>
          </LeftPane>
          <RightPane>
            <UnitRow>
              单位:
              <UnitValue>mm</UnitValue>
              <Radio $on />
              角度放坡形式
              <Radio />
              底宽放坡形式
              <PrimaryBtn $w={100} $auto>配筋形式</PrimaryBtn>
            </UnitRow>
            <CadPreview />
          </RightPane>
        </ModalBody>
        <ModalFoot>
          <PrimaryBtn $w={100}>确定</PrimaryBtn>
          <GhostBtn>取消</GhostBtn>
        </ModalFoot>
      </Modal>

      <ArrowLayer viewBox="0 0 1692 841">
        <polygon fill="#fb2712" points={arrowPoints([1198, 795], [244, 225], 15, 22, 11, 1)} />
        <polygon fill="#fb2712" points={arrowPoints([1239, 745], [781, 366], 15, 22, 12, 2)} />
        <polygon fill="#fb2712" points={arrowPoints([1239, 745], [974, 367], 15, 20, 10, 2)} />
      </ArrowLayer>
    </Page>
  </>
);

export default App;
